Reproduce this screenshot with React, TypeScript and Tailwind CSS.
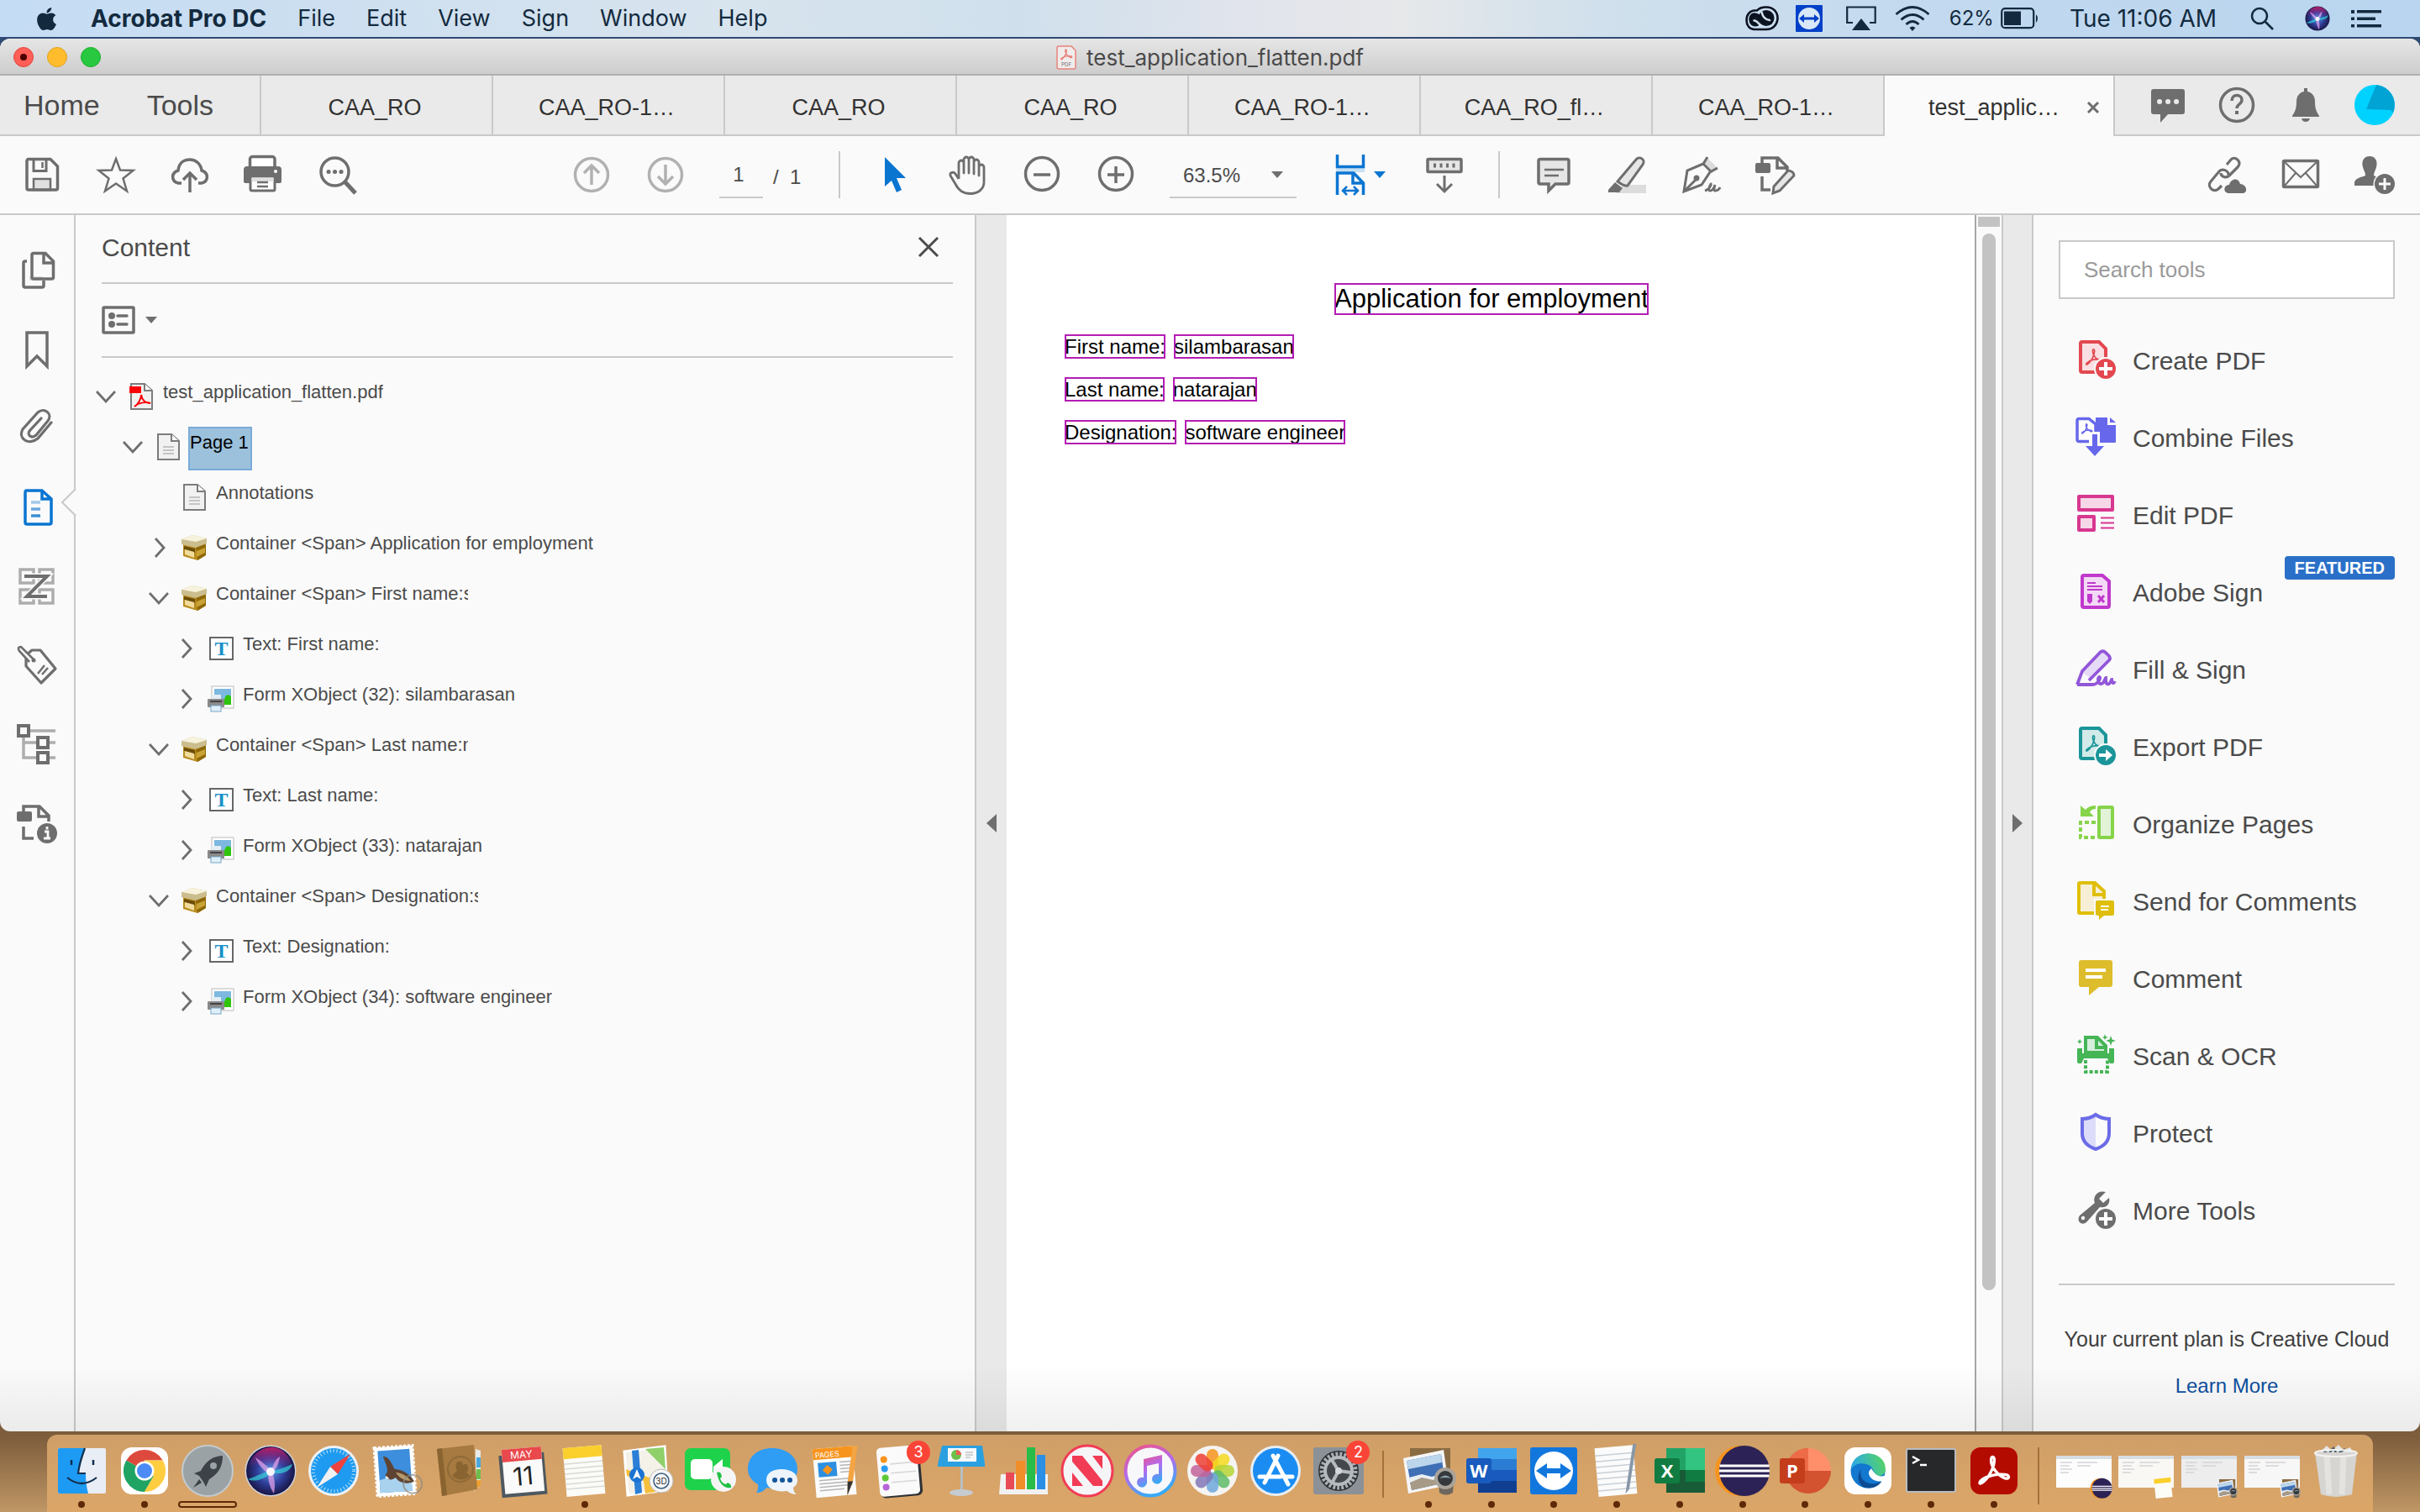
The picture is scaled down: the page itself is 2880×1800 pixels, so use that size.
import React, { useState } from "react";
import { FaApple } from "react-icons/fa";

const GRAY = "#6e6e6e";

interface IconProps {
  children: React.ReactNode;
  className?: string;
}

// Line icon on a 48 grid, shared by the toolbar, the rail and the tools pane
function Icon({ children, className = "size-12 shrink-0" }: IconProps) {
  return (
    <svg viewBox="0 0 48 48" className={className} fill="none" stroke={GRAY} strokeWidth="3.5" overflow="visible" aria-hidden="true">
      {children}
    </svg>
  );
}

function AcrobatMark({ color, width = 2 }: { color: string; width?: number }) {
  return (
    <path
      d="M11 37C18 33 24 21 24.500 13C24.700 8 21 8 21 13C21 20 28 29 36 32C41 33.500 41 28.500 36 28C28 27 18 29 12 33C8 35.500 8 39 11 37Z"
      fill="none"
      stroke={color}
      strokeWidth={width}
      strokeLinejoin="round"
    />
  );
}

/* ---------- menu bar ---------- */

const menus = ["File", "Edit", "View", "Sign", "Window", "Help"];

function SiriOrb() {
  return (
    <>
      <defs>
        <radialGradient id="orb" cx="50%" cy="50%" r="55%">
          <stop offset="0" stopColor="#5d9bea" />
          <stop offset="0.5" stopColor="#2f3f9a" />
          <stop offset="1" stopColor="#140d33" />
        </radialGradient>
        <linearGradient id="orbTop" x1="0" y1="0" x2="0" y2="1">
          <stop offset="0" stopColor="#b81f66" />
          <stop offset="1" stopColor="#8a2fa8" stopOpacity="0" />
        </linearGradient>
      </defs>
      <circle cx="32" cy="32" r="29" fill="url(#orb)" />
      <path d="M6 28C9 12 22 4 34 4C47 5 56 15 58 28C44 24 22 24 6 28Z" fill="url(#orbTop)" />
      <path d="M5 42C16 38 26 33 32 32C40 32 48 28 58 24C55 34 44 37 34 34C24 42 14 46 5 42Z" fill="#35d0d8" opacity="0.7" />
      <path d="M29 35C23 31 17 24 14 16C22 21 30 28 33 32C35 24 38 18 43 15C42 24 38 31 34 34C37 42 38 50 36 59C31 52 29 43 29 35Z" fill="#eba6ee" opacity="0.7" />
      <circle cx="32" cy="33" r="5" fill="#fff" opacity="0.9" />
    </>
  );
}

function MenuBar() {
  return (
    <header className="flex h-11 items-center bg-linear-[90deg,#c4dcf4_0%,#cddff0_14%,#d8e4ee_30%,#cfe0ec_42%,#e2e4ec_52%,#e6e8ea_58%,#d0e0ec_66%,#c2d9ef_80%,#b9d5ef_100%] pr-[46px] pl-10 font-[Inter,sans-serif] text-[27px] text-[#132a3e]">
      <FaApple size={31} aria-hidden="true" />
      <nav className="ml-[37px] flex items-center gap-[37px] leading-8">
        <strong className="text-[28px] font-bold">Acrobat Pro DC</strong>
        {menus.map((m) => (
          <button key={m} type="button">
            {m}
          </button>
        ))}
      </nav>

      <div className="ml-auto flex items-center">
        <svg viewBox="0 0 40 30" className="mr-5 h-[30px] w-10" fill="none" aria-hidden="true">
          <path d="M11 5.500H14C17 2 21 1.500 25 1.500C33 1.500 38.500 7 38.500 14.500C38.500 22 33 28 25 28H11C5 28 1.500 23 1.500 17C1.500 10 6 5.500 11 5.500Z" stroke="#0b1220" strokeWidth="2.600" />
          <circle cx="25" cy="14.500" r="9.500" fill="#0b1220" />
          <circle cx="12" cy="17" r="7.500" fill="#0b1220" />
          <path d="M21 23L11 13.500M22 24C16 24 14 17 9.500 15.500M27 22C21 20 18 8 11.500 9.500" stroke="#d0e0ec" strokeWidth="0.100" />
          <path d="M25 21C20 17 17 10 12 9.500C8 9 5.500 12 5.500 16.500" stroke="#0b1220" strokeWidth="2.500" />
          <path d="M19 24C15 20 13 17 10.500 17.500M19.500 7.500C21 14 24 16.500 29 17" stroke="#d0e0ec" strokeWidth="2.600" strokeLinecap="round" />
        </svg>
        <svg viewBox="0 0 32 32" className="mr-7 size-8" aria-hidden="true">
          <rect width="32" height="32" rx="1" fill="#0040c8" />
          <circle cx="16" cy="16" r="13" fill="#d8e8f8" />
          <path d="M4 16l6-5v3.500h12V11l6 5-6 5v-3.500H10V21z" fill="#0040c8" />
        </svg>
        <svg viewBox="0 0 36 30" className="mr-[22px] h-[30px] w-9" fill="none" stroke="#132a3e" strokeWidth="2.200" aria-hidden="true">
          <path d="M8 20H1.200V1.500h33.500V20H28" />
          <path d="M18 15l11 14H7z" fill="#132a3e" stroke="none" />
        </svg>
        <svg viewBox="0 0 42 30" className="mr-[23px] h-[30px] w-[42px]" fill="none" stroke="#132a3e" strokeWidth="2.800" aria-hidden="true">
          <path d="M1.500 10q19.500-17 39 0M7.500 16.500q13.500-12 27 0M13.500 22q7.500-7 15 0" />
          <path d="M17.500 26q3.500-3 7 0L21 30z" fill="#132a3e" stroke="none" />
        </svg>
        <span className="mr-2 text-2xl">62%</span>
        <svg viewBox="0 0 46 26" className="mr-9 h-[26px] w-[46px]" aria-hidden="true">
          <rect x="1.200" y="1.200" width="38" height="23" rx="4" fill="none" stroke="#132a3e" strokeWidth="2.200" />
          <rect x="4" y="4.500" width="20" height="16.500" fill="#132a3e" />
          <path d="M42 8q4 5 0 10z" fill="#132a3e" />
        </svg>
        <time className="mr-10 text-[28px]">Tue 11:06 AM</time>
        <svg viewBox="0 0 28 28" className="mr-9 size-7" fill="none" stroke="#132a3e" strokeWidth="2.600" aria-hidden="true">
          <circle cx="11" cy="11" r="9" />
          <path d="M17.500 17.500L27 27" />
        </svg>
        <svg viewBox="0 0 64 64" className="mr-6 size-8" aria-hidden="true">
          <SiriOrb />
        </svg>
        <svg viewBox="0 0 36 22" className="h-[22px] w-9" fill="#132a3e" aria-hidden="true">
          <path d="M0 1h4v4H0zM7 1h29v3.500H7zM0 9.500h4v3.500H0zM7 9.500h22v3.500H7zM0 18h4v3.500H0zM7 18h29v3.500H7z" />
        </svg>
      </div>
    </header>
  );
}

/* ---------- window chrome ---------- */

function TitleBar() {
  return (
    <div className="relative flex h-11 items-center justify-center gap-3 border-b-2 border-[#b0b0b0] bg-linear-to-b from-[#e6e6e6] to-[#cdcdcd] pt-0.5 font-[Inter,sans-serif] text-[26px] text-[#4a4a4a]">
      <div className="absolute left-4 flex gap-4">
        <button type="button" aria-label="Close window" className="flex size-6 items-center justify-center rounded-full border border-[#e2463f] bg-[#ff5f57]">
          <span className="size-2 rounded-full bg-[#4d0000]" />
        </button>
        <button type="button" aria-label="Minimize window" className="size-6 rounded-full border border-[#e0a023] bg-[#ffbd2e]" />
        <button type="button" aria-label="Zoom window" className="size-6 rounded-full border border-[#1dad2b] bg-[#28c940]" />
      </div>
      <svg viewBox="0 0 24 29" className="h-[29px] w-6" aria-hidden="true">
        <path d="M3 1h15l5 5v20a2 2 0 0 1-2 2H3a2 2 0 0 1-2-2V3a2 2 0 0 1 2-2Z" fill="#f0ecec" stroke="#e8837b" strokeWidth="1.500" />
        <g transform="translate(2 1) scale(0.42)">
          <AcrobatMark color="#e8837b" width={3.5} />
        </g>
        <text x="12" y="25" textAnchor="middle" fontSize="6.500" fill="#777" fontFamily="Roboto, sans-serif">PDF</text>
      </svg>
      <h1>test_application_flatten.pdf</h1>
    </div>
  );
}

const tabs = ["CAA_RO", "CAA_RO-1…", "CAA_RO", "CAA_RO", "CAA_RO-1…", "CAA_RO_fl…", "CAA_RO-1…"];

function TabBar() {
  return (
    <div className="flex h-[72px] bg-[#eaeaea] text-[27px] text-[#323232]">
      <nav className="flex w-[309px] shrink-0 items-center gap-14 border-b-2 border-[#c9c9c9] pl-7 text-[34px] text-[#4b4b4b]">
        <button type="button">Home</button>
        <button type="button">Tools</button>
      </nav>
      {tabs.map((t, i) => (
        <button key={i} type="button" className="w-[276px] border-b-2 border-l-2 border-[#c9c9c9] pt-1.5 pr-1">
          {t}
        </button>
      ))}
      <div className="flex w-[276px] items-center border-x-2 border-[#c9c9c9] bg-[#fafafa] pt-1 pr-4 pl-[52px]">
        <button type="button">test_applic…</button>
        <button type="button" aria-label="Close tab" className="ml-auto">
          <svg viewBox="0 0 16 16" className="size-4" stroke={GRAY} strokeWidth="3" aria-hidden="true">
            <path d="M2 2l12 12M14 2L2 14" />
          </svg>
        </button>
      </div>
      <div className="flex flex-1 items-center justify-end gap-[34px] border-b-2 border-[#c9c9c9] pr-[30px]">
        <button type="button" aria-label="Messages">
          <Icon>
            <path d="M7 5h34a3 3 0 0 1 3 3v24a3 3 0 0 1-3 3H24L15 45V35H7a3 3 0 0 1-3-3V8a3 3 0 0 1 3-3Z" fill={GRAY} stroke="none" />
            <path d="M14 20h.1M24 20h.1M34 20h.1" stroke="#eaeaea" strokeWidth="6" strokeLinecap="round" />
          </Icon>
        </button>
        <button type="button" aria-label="Help">
          <Icon>
            <circle cx="24" cy="24" r="19.500" />
            <path d="M18 19c0-9 12-8 12-1c0 5-6 5-6 10" />
            <path d="M24 31v4" strokeWidth="4" />
          </Icon>
        </button>
        <button type="button" aria-label="Notifications">
          <Icon>
            <path d="M22 4h4v4c6 1 9 6 9 12c0 9 2 12 5 17v1H8v-1c3-5 5-8 5-17c0-6 3-11 9-12ZM19 40h10q-1 4-5 4t-5-4Z" fill={GRAY} stroke="none" />
          </Icon>
        </button>
        <button type="button" aria-label="Account">
          <Icon>
            <circle cx="24" cy="24" r="24" fill="#00d2ff" stroke="none" />
            <path d="M26 0A24 24 0 0 1 46 33L43 30L14 29Z" fill="#00a3d3" stroke="none" />
          </Icon>
        </button>
      </div>
    </div>
  );
}

/* ---------- toolbar ---------- */

const fileActions = [
  {
    label: "Save",
    art: (
      <>
        <rect x="14" y="29" width="20" height="13" fill="#e0e0e0" strokeWidth="2.500" />
        <path d="M8 5.500H34L42.500 14V40a2 2 0 0 1-2 2H8a2 2 0 0 1-2-2V8a2 2 0 0 1 2-2.500Z" />
        <path d="M14 6V19.500H29V6" strokeWidth="3" />
        <path d="M24.500 9v7" strokeWidth="2.500" />
      </>
    ),
  },
  { label: "Star", art: <path d="M24 5L29 18.500L44.500 19L32.500 28.500L37 43.500L24 34.500L11 43.500L15.500 28.500L3.500 19L19 18.500Z" strokeWidth="2.500" /> },
  {
    label: "Upload",
    art: (
      <>
        <path d="M14 34H10C2 32 1 22 10 19C11 9 18 6 24 6C31 6 37 11 38 19C47 22 46 32 38 34H34" />
        <path d="M24 45V22M16 30L24 22L32 30" />
      </>
    ),
  },
  {
    label: "Print",
    art: (
      <>
        <path d="M7.500 15V5.500a3 3 0 0 1 3-3H34a3 3 0 0 1 3 3V15" fill="#fff" />
        <path d="M3 14H41a4 4 0 0 1 4 4V32a2 2 0 0 1-2 2H38V28H7V34H2a2 2 0 0 1-2-2V18a4 4 0 0 1 3-4Z" fill={GRAY} stroke="none" />
        <path d="M8 26H37V41a2 2 0 0 1-2 2H10a2 2 0 0 1-2-2Z" fill="#fff" strokeWidth="3" />
        <path d="M9.500 27.500H35.500V32H9.500Z" fill="#e0e0e0" stroke="none" />
        <path d="M16 33H29M16 38H29" strokeWidth="2.500" />
        <circle cx="38" cy="20" r="2" fill="#fff" stroke="none" />
      </>
    ),
  },
  {
    label: "Find",
    art: (
      <>
        <circle cx="20.500" cy="20.500" r="16.500" />
        <path d="M32 32L45 46" strokeWidth="5" />
        <path d="M13 20.500h.1M20.500 20.500h.1M28 20.500h.1" strokeWidth="5" strokeLinecap="round" />
      </>
    ),
  },
];

const pageActions = [
  { label: "Previous page", art: <path d="M24 36V13M15 22L24 13L33 22" stroke="#b1b1b1" /> },
  { label: "Next page", art: <path d="M24 12V35M15 26L24 35L33 26" stroke="#b1b1b1" /> },
];

const viewActions = [
  { label: "Select", art: <path d="M13 3L38 28H27L33 42L27 45L21 31L13 38Z" fill="#0a75d1" stroke="none" /> },
  {
    label: "Hand",
    art: (
      <path
        d="M13 29V10a3 3 0 0 1 6 0V22V6a3 3 0 0 1 6 0V22V6a3 3 0 0 1 6 0V23V9a3 3 0 0 1 6 0V25V15a3 3 0 0 1 6 0V33C43 40 37 46.500 27 46.500C18 46.500 13 43 9 35L3 25C2 21 7 20 9 23L13 29"
        strokeWidth="2.800"
        strokeLinejoin="round"
      />
    ),
  },
  {
    label: "Zoom out",
    art: (
      <>
        <circle cx="24" cy="23" r="19.500" />
        <path d="M14 24H34" />
      </>
    ),
  },
  {
    label: "Zoom in",
    art: (
      <>
        <circle cx="24" cy="23" r="19.500" />
        <path d="M14 24H34M24 14V34" />
      </>
    ),
  },
];

const markupActions = [
  {
    label: "Comment",
    art: (
      <>
        <path d="M8 5.500H40a2 2 0 0 1 2 2V33a2 2 0 0 1-2 2H26L18 43V35H8a2 2 0 0 1-2-2V7.500a2 2 0 0 1 2-2Z" fill="#e6e6e6" />
        <path d="M13 18H36M13 25H30" strokeWidth="2.500" />
      </>
    ),
  },
  {
    label: "Highlight",
    art: (
      <>
        <path d="M10 46L18 36H46V46Z" fill="#dcdcdc" stroke="none" />
        <path d="M12 32L34 6C38 1 46 6 42 12L24 37Q20 38 12 32Z" fill="#e6e6e6" strokeWidth="3" />
        <path d="M9 33L18 40L14 45H1V42Z" fill={GRAY} stroke="none" />
      </>
    ),
  },
  {
    label: "Sign",
    art: (
      <>
        <path d="M31 4L43 16L36 20L26 10Z" fill="#dcdcdc" stroke="none" />
        <path d="M31 3L26 11L7 19L3 44L24 36L34 21L43 16M26 11L36 21M4 43L17 30" strokeWidth="3" />
        <circle cx="18" cy="28" r="3.500" fill={GRAY} stroke="none" />
        <path d="M28 43C34 42 36 34 35 35C33 38 31 44 35 43C38 42 40 36 40 36C39 40 38 44 41 43Q45 42 46 39" strokeWidth="2.800" />
      </>
    ),
  },
  {
    label: "Edit",
    art: (
      <>
        <path d="M8 10V4H27L38 15V20M26 5V16H37M8 26V42H18" />
        <rect x="0" y="10" width="18" height="12" rx="2" fill={GRAY} stroke="none" />
        <path d="M22 38L39 19Q46 20 46 25L29 43L21 46Z" fill="#e6e6e6" strokeWidth="3" />
      </>
    ),
  },
];

const shareActions = [
  {
    label: "Share link",
    art: (
      <>
        <path d="M24 12L29 6C34 1 43 9 37 15L27 25C23 29 17 26 17 22M18 37L14 41C8 46 0 38 5 32L15 20C19 16 26 19 26 24" strokeWidth="3.200" />
        <path d="M27 46C19 46 20 36 27 36C29 28 38 27 40 35C49 36 49 46 43 46Z" fill={GRAY} stroke="none" />
      </>
    ),
  },
  {
    label: "Email",
    art: (
      <>
        <rect x="3.500" y="7.500" width="41" height="31" rx="1" />
        <path d="M5 9L24 27L43 9M5 37L18 22M43 37L30 22" strokeWidth="2" />
      </>
    ),
  },
  {
    label: "Add people",
    art: (
      <>
        <path d="M18 2C25 2 28 8 26 15C25 19 23 21 23 25L32 29V37H0V33C1 28 8 27 13 25C13 21 11 19 10 15C8 8 11 2 18 2Z" fill={GRAY} stroke="none" />
        <circle cx="36" cy="35" r="13.500" fill="#fafafa" stroke="none" />
        <circle cx="36" cy="35" r="12" fill={GRAY} stroke="none" />
        <path d="M29 35H43M36 28V42" stroke="#fafafa" strokeWidth="3" />
      </>
    ),
  },
];

function Actions({ items, className }: { items: { label: string; art: React.ReactNode }[]; className: string }) {
  return (
    <div className={`flex gap-10 ${className}`}>
      {items.map((a) => (
        <button key={a.label} type="button" aria-label={a.label}>
          <Icon>{a.art}</Icon>
        </button>
      ))}
    </div>
  );
}

function Caret({ color = GRAY, className = "h-2 w-[14px]" }: { color?: string; className?: string }) {
  return (
    <svg viewBox="0 0 14 8" className={className} fill={color} aria-hidden="true">
      <path d="M0 0H14L7 8Z" />
    </svg>
  );
}

function Toolbar() {
  const [page, setPage] = useState("1");
  const [zoom, setZoom] = useState("63.5%");

  return (
    <div className="flex h-[94px] items-center border-b-2 border-[#c9c9c9] bg-[#fafafa] pr-[30px] pl-[26px] text-2xl text-[#4b4b4b]">
      <Actions items={fileActions} className="mr-[254px]" />
      <Actions
        items={pageActions.map((a) => ({
          ...a,
          art: (
            <>
              <circle cx="24" cy="24" r="19.500" stroke="#b1b1b1" />
              {a.art}
            </>
          ),
        }))}
        className="mr-10"
      />
      <input
        aria-label="Page number"
        value={page}
        onChange={(e) => setPage(e.target.value)}
        className="h-14 w-[52px] border-b-2 border-[#c9c9c9] bg-transparent pt-0.5 pr-1.5 text-center outline-none"
      />
      <span className="ml-3 w-[78px] pt-1.5">/&nbsp; 1</span>
      <div className="mr-10 h-14 w-0.5 bg-[#c9c9c9]" />
      <Actions items={viewActions} className="mr-10" />
      <div className="relative mr-10">
        <select
          aria-label="Zoom level"
          value={zoom}
          onChange={(e) => setZoom(e.target.value)}
          className="h-14 w-[151px] appearance-none border-b-2 border-[#c9c9c9] bg-transparent pt-1 pl-4 outline-none"
        >
          <option>63.5%</option>
          <option>100%</option>
        </select>
        <Caret className="pointer-events-none absolute top-6 right-4 h-2 w-[14px]" />
      </div>
      <button type="button" aria-label="Fit width" className="mr-[46px] flex items-center gap-1">
        <Icon>
          <rect x="7" y="16" width="34" height="5" fill="#c5dff3" stroke="none" />
          <path d="M8.500 0V14.500H39.500V0M8.500 48V22H28L39.500 34V48M27 22V34H39" stroke="#0a75d1" />
          <path d="M15 43H33M20 38L15 43L20 48M28 38L33 43L28 48" stroke="#0a75d1" strokeWidth="2.500" />
        </Icon>
        <Caret color="#0a75d1" />
      </button>
      <button type="button" aria-label="Scrolling">
        <Icon>
          <rect x="4" y="5.500" width="40" height="15" rx="1" fill="#e6e6e6" />
          <path d="M11 13H39" strokeWidth="5" strokeDasharray="3 4.500" />
          <path d="M24 25V44M15 35L24 44L33 35" strokeWidth="3" />
        </Icon>
      </button>
      <div className="mx-10 h-14 w-0.5 bg-[#c9c9c9]" />
      <Actions items={markupActions} className="" />
      <Actions items={shareActions} className="ml-auto" />
    </div>
  );
}

/* ---------- navigation rail ---------- */

const railItems = [
  {
    label: "Page thumbnails",
    art: (
      <>
        <path d="M15 36H31V31H15Z" fill="#e0e0e0" stroke="none" />
        <path d="M12 13H10a2 2 0 0 0-2 2V42a2 2 0 0 0 2 2H30a2 2 0 0 0 2-2V36" />
        <path d="M20 3.500H34L43.500 13V32a2 2 0 0 1-2 2H20a2 2 0 0 1-2-2V5.500a2 2 0 0 1 2-2ZM32 4V15H43" />
      </>
    ),
  },
  { label: "Bookmarks", art: <path d="M12 4H36V44L24 32L12 44Z" /> },
  {
    label: "Attachments",
    art: (
      <path
        d="M41 18L25 37C14 46 1 37 7 26L25 6C33 -1 43 8 37 16L23 33C17 38 11 32 16 27L29 13"
        strokeWidth="3.200"
        strokeLinecap="round"
        transform="translate(0 -1)"
      />
    ),
  },
  {
    label: "Content",
    active: true,
    art: (
      <>
        <path d="M11 4H30L41 14V42a2 2 0 0 1-2 2H12a2 2 0 0 1-2-2V6a2 2 0 0 1 1-2ZM30 4V14H41" stroke="#0a75d1" />
        <path d="M17 18H28" stroke="#a3c9ea" />
        <path d="M17 26H28" stroke="#6aa8de" />
        <path d="M17 34H28" stroke="#3c8fd6" />
      </>
    ),
  },
  {
    label: "Order",
    art: (
      <>
        <path d="M4 4H20V20H4ZM27 4H43V20H27ZM4 28H20V44H4ZM27 28H43V44H27Z" stroke="#adadad" />
        <path d="M10 12H36L12 36H36" stroke="#fafafa" strokeWidth="7" />
        <path d="M9 12H36L12 36H36" strokeWidth="4" />
      </>
    ),
  },
  {
    label: "Tags",
    art: (
      <>
        <path d="M18 6L11 12V25L29 45L46 28L28 6Z" strokeWidth="3.200" strokeLinejoin="round" />
        <path d="M21 18L5 2Q0 2 3 7L15 20" strokeWidth="2.600" fill="#fafafa" />
        <circle cx="20" cy="18" r="2.500" fill={GRAY} stroke="none" />
        <path d="M25 34L33 24M30 35L37 27" strokeWidth="2.500" />
      </>
    ),
  },
  {
    label: "Model tree",
    art: (
      <>
        <path d="M15 8H46M8 15V40H24M8 22H24M37 22H46M37 40H46" stroke="#adadad" />
        <path d="M2 2H14V14H2ZM25 16H37V28H25ZM25 34H37V46H25Z" fill="#fafafa" strokeWidth="4" />
      </>
    ),
  },
  {
    label: "Document info",
    art: (
      <>
        <path d="M8 10V4H27L38 15V22M26 5V16H37M8 28V42H20" />
        <rect x="0" y="10" width="18" height="12" rx="2" fill={GRAY} stroke="none" />
        <circle cx="36" cy="36" r="12" fill={GRAY} stroke="none" />
        <path d="M36 28V31.500M33 34H37V42M32 42H40" stroke="#fafafa" strokeWidth="2.800" />
      </>
    ),
  },
];

function Rail() {
  return (
    <nav className="flex w-[90px] shrink-0 flex-col items-center gap-[46px] border-r-2 border-[#c9c9c9] pt-[42px]">
      {railItems.map((r) => (
        <button key={r.label} type="button" aria-label={r.label} className="relative">
          <Icon>{r.art}</Icon>
          {r.active && (
            <svg viewBox="0 0 18 32" className="absolute top-0.5 left-[53px] h-8 w-[18px]" aria-hidden="true">
              <path d="M18 0L1 16L18 32Z" fill="#fafafa" />
              <path d="M17 0L1 16L17 32" fill="none" stroke="#c9c9c9" strokeWidth="2" />
            </svg>
          )}
        </button>
      ))}
    </nav>
  );
}

/* ---------- content tree ---------- */

type NodeKind = "pdf" | "page" | "box" | "text" | "form";

interface TreeNode {
  kind: NodeKind;
  level: number;
  open?: boolean;
  label: string;
  selected?: boolean;
  clip?: string;
}

const nodes: TreeNode[] = [
  { kind: "pdf", level: 0, open: true, label: "test_application_flatten.pdf" },
  { kind: "page", level: 1, open: true, label: "Page 1", selected: true },
  { kind: "page", level: 2, label: "Annotations" },
  { kind: "box", level: 2, open: false, label: "Container <Span> Application for employment" },
  { kind: "box", level: 2, open: true, label: "Container <Span> First name:s", clip: "w-[304px]" },
  { kind: "text", level: 3, open: false, label: "Text: First name:" },
  { kind: "form", level: 3, open: false, label: "Form XObject (32): silambarasan" },
  { kind: "box", level: 2, open: true, label: "Container <Span> Last name:n", clip: "w-[304px]" },
  { kind: "text", level: 3, open: false, label: "Text: Last name:" },
  { kind: "form", level: 3, open: false, label: "Form XObject (33): natarajan" },
  { kind: "box", level: 2, open: true, label: "Container <Span> Designation:s", clip: "w-[316px]" },
  { kind: "text", level: 3, open: false, label: "Text: Designation:" },
  { kind: "form", level: 3, open: false, label: "Form XObject (34): software engineer" },
];

const indents = ["pl-6", "pl-14", "pl-[87px]", "pl-[119px]"];

function NodeIcon({ kind }: { kind: NodeKind }) {
  return (
    <svg viewBox="0 0 32 32" className="size-8 shrink-0" aria-hidden="true">
      {(kind === "pdf" || kind === "page") && (
        <>
          <path d="M4 1H20L29 9V31H4Z" fill="#f1f1f1" stroke="#7c7c7c" strokeWidth="2" />
          <path d="M20 1V9H29" fill="#fff" stroke="#7c7c7c" strokeWidth="2" />
        </>
      )}
      {kind === "page" && <path d="M10 16H23M10 20H23M10 24H23" stroke="#b5b5b5" strokeWidth="1.500" />}
      {kind === "pdf" && (
        <>
          <rect x="2" y="4" width="14" height="8" fill="#fb0007" />
          <path d="M8 28C13 25 16 18 16 14C17 20 21 24 27 24C22 22 13 23 8 28Z" fill="none" stroke="#fb0007" strokeWidth="2" />
        </>
      )}
      {kind === "box" && (
        <>
          <path d="M3 12L18 15L30 11V25L20 31L3 26Z" fill="#b98c20" />
          <path d="M18 15L30 11V25L20 31Z" fill="#8e6706" />
          <path d="M4 14L17 17V22L4 18Z" fill="#6b4d08" />
          <path d="M5 18L16 21V28L5 24Z" fill="#f0dc9c" />
          <path d="M19 20L29 16V22L19 27Z" fill="#c9a235" />
          <path d="M1 6L14 1L31 5V11L18 16L1 12Z" fill="#cbbd8d" />
          <path d="M1 6L14 1L31 5L18 9Z" fill="#f7f2dc" />
        </>
      )}
      {kind === "text" && (
        <>
          <rect x="3" y="3" width="27" height="26" fill="#fff" stroke="#666" strokeWidth="2" />
          <text x="16.500" y="24" textAnchor="middle" fontFamily="'Liberation Serif', serif" fontWeight="700" fontSize="24" fill="#1a8fc7">T</text>
        </>
      )}
      {kind === "form" && (
        <>
          <rect x="5" y="1" width="26" height="26" fill="#fff" stroke="#cfcfcf" strokeWidth="1.500" />
          <rect x="8" y="4" width="20" height="19" fill="#7db8e0" />
          <path d="M17 23L22 12Q25 10 28 13V23Z" fill="#2fc40c" />
          <rect x="5" y="11" width="11" height="8" fill="#e4edf4" />
          <rect x="0" y="16" width="20" height="10" rx="1" fill="#8a8a8a" />
          <path d="M3 18H17V20H3Z" fill="#444" />
          <rect x="4" y="24" width="12" height="7" fill="#dff0fa" stroke="#7ba8c7" />
        </>
      )}
    </svg>
  );
}

function ContentPanel() {
  return (
    <aside className="w-[1072px] shrink-0 border-r-2 border-[#c9c9c9] text-[#4b4b4b]">
      <div className="mr-[26px] ml-[31px]">
        <div className="flex h-[82px] items-center justify-between border-b-2 border-[#c9c9c9] pr-4 pb-1 text-[30px]">
          <h2>Content</h2>
          <button type="button" aria-label="Close panel">
            <svg viewBox="0 0 26 26" className="size-[26px]" stroke="#4b4b4b" strokeWidth="3" aria-hidden="true">
              <path d="M2 2L24 24M24 2L2 24" />
            </svg>
          </button>
        </div>
        <div className="flex h-[88px] items-center border-b-2 border-[#c9c9c9]">
          <button type="button" aria-label="Options" className="flex items-center gap-3">
            <svg viewBox="0 0 40 34" className="h-[34px] w-10" aria-hidden="true">
              <rect x="2" y="2" width="36" height="30" rx="1" fill="none" stroke={GRAY} strokeWidth="3.500" />
              <circle cx="12" cy="12" r="4" fill={GRAY} />
              <circle cx="12" cy="22" r="4" fill={GRAY} />
              <path d="M19 12H30M19 22H30" stroke={GRAY} strokeWidth="3.500" strokeLinecap="round" />
            </svg>
            <Caret />
          </button>
        </div>
      </div>
      <ul className="mt-[18px] text-[22px] leading-7">
        {nodes.map((n) => (
          <li key={n.label} className={`flex h-[60px] items-center ${indents[n.level]}`}>
            {n.open === undefined ? (
              <span className="mr-[14px] w-6" />
            ) : (
              <button type="button" aria-label={n.open ? "Collapse" : "Expand"} className="mr-[14px] mb-1">
                <svg viewBox="0 0 24 24" className="size-6" fill="none" stroke={GRAY} strokeWidth="2.800" aria-hidden="true">
                  <path d={n.open ? "M1 6L12 18L23 6" : "M8 1L18 12L8 23"} />
                </svg>
              </button>
            )}
            <span className="mb-1">
              <NodeIcon kind={n.kind} />
            </span>
            <span
              className={`ml-2 h-[52px] overflow-hidden border-2 pt-[3px] whitespace-nowrap ${
                n.selected ? "border-[#7aaad8] bg-[#9cc1dc] pr-0.5 text-black" : "border-transparent"
              } ${n.clip ?? ""}`}
            >
              {n.label}
            </span>
          </li>
        ))}
      </ul>
    </aside>
  );
}

/* ---------- document ---------- */

const fields = [
  ["First name:", "silambarasan"],
  ["Last name:", "natarajan"],
  ["Designation:", "software engineer"],
];

function Tagged({ children }: { children: React.ReactNode }) {
  return <span className="outline-2 -outline-offset-2 outline-[#b41cb4]">{children}</span>;
}

function DocumentView() {
  return (
    <main className="flex min-w-0 flex-1">
      <button type="button" aria-label="Collapse left pane" className="flex w-9 shrink-0 items-center justify-center bg-[#e9e9e9]">
        <svg viewBox="0 0 12 22" className="h-[22px] w-3" fill={GRAY} aria-hidden="true">
          <path d="M12 0V22L0 11Z" />
        </svg>
      </button>
      <article className="flex-1 border-r-2 border-[#a6a6a6] bg-white pt-[81px] pl-[69px] text-black">
        <h2 className="pr-[67px] text-center text-[31px] leading-[38px]">
          <span className="inline-block outline-2 -outline-offset-2 outline-[#b41cb4]">Application for employment</span>
        </h2>
        <div className="mt-[23px] flex flex-col gap-[22px] text-2xl leading-[29px]">
          {fields.map(([name, value]) => (
            <p key={name} className="flex gap-[10px]">
              <Tagged>{name}</Tagged>
              <Tagged>{value}</Tagged>
            </p>
          ))}
        </div>
      </article>
      <div className="flex w-8 shrink-0 flex-col items-center border-r-2 border-[#c9c9c9] bg-[#fafafa] pt-0.5">
        <span className="h-3 w-[26px] bg-[#c3c3c3]" />
        <span className="mt-2 mb-[168px] w-4 flex-1 rounded-full bg-[#c3c3c3]" />
      </div>
      <button type="button" aria-label="Collapse tools pane" className="flex w-9 shrink-0 items-center justify-center border-r-2 border-[#c9c9c9] bg-[#e9e9e9]">
        <svg viewBox="0 0 12 22" className="h-[22px] w-3" fill={GRAY} aria-hidden="true">
          <path d="M0 0V22L12 11Z" />
        </svg>
      </button>
    </main>
  );
}

/* ---------- tools pane ---------- */

const tools = [
  {
    label: "Create PDF",
    art: (
      <>
        <path d="M8 2H28L36 10V38H8a2 2 0 0 1-2-2V4a2 2 0 0 1 2-2Z" fill="#f9dfe1" stroke="#e34850" strokeWidth="4" />
        <g transform="translate(7 5) scale(0.64)"><AcrobatMark color="#e34850" width={2.6} /></g>
        <circle cx="36" cy="34" r="14" fill="#fafafa" stroke="none" />
        <circle cx="36" cy="34" r="12" fill="#e34850" stroke="none" />
        <path d="M28 34H44M36 26V42" stroke="#fff" strokeWidth="4" />
      </>
    ),
  },
  {
    label: "Combine Files",
    art: (
      <>
        <path d="M24 0H38V9H48V29a1 1 0 0 1-1 1H24ZM41 0L48 6H41Z" fill="#6767ec" stroke="none" />
        <path d="M16 28.500H4a2 2 0 0 1-2-2V3.500a2 2 0 0 1 2-2H16L24 8V18" fill="#fff" stroke="#6767ec" />
        <g transform="translate(4 4) scale(0.4)"><AcrobatMark color="#6767ec" width={3.5} /></g>
        <path d="M20 17H29V32H20Z" fill="#fafafa" stroke="none" />
        <path d="M20 20H26V34H34L23 46L12 34H20Z" fill="#6767ec" stroke="none" />
      </>
    ),
  },
  {
    label: "Edit PDF",
    art: (
      <>
        <path d="M4 2H44V18H4ZM4 26H22V42H4Z" fill="#f6d7e7" stroke="#d83790" strokeWidth="4" strokeLinejoin="round" />
        <path d="M30 27.500H46M30 33.500H46M30 39.500H46" stroke="#d83790" strokeWidth="2" />
      </>
    ),
  },
  {
    label: "Adobe Sign",
    featured: true,
    art: (
      <>
        <path d="M10 4H32L40 11V40a2 2 0 0 1-2 2H10a2 2 0 0 1-2-2V6a2 2 0 0 1 2-2Z" fill="#f3d9f5" stroke="#c038cc" strokeWidth="4" />
        <path d="M14 13H24M14 17H32M14 21H32" stroke="#c038cc" strokeWidth="1.800" />
        <path d="M14 26H20V35L17 38L14 35Z" fill="#c038cc" stroke="none" />
        <path d="M27 28L34 36M34 28L27 36" stroke="#c038cc" strokeWidth="3" />
      </>
    ),
  },
  {
    label: "Fill & Sign",
    art: (
      <>
        <path d="M8 27L31 3Q34 1 37 4L40 7Q43 10 40 13L18 35Z" fill="#e6dbf6" stroke="none" />
        <path d="M2 42L8 26L30 3Q33 1 36 4L40 8Q42 11 40 13L16 37M2 42H20C28 42 31 32 28 33C26 35 27 42 31 41C35 40 35 34 36 34C36 38 36 43 40 41C43 39 42 36 43 36C43 40 45 42 47 38" stroke="#9256d9" strokeWidth="3.800" />
      </>
    ),
  },
  {
    label: "Export PDF",
    art: (
      <>
        <path d="M8 2H28L36 10V38H8a2 2 0 0 1-2-2V4a2 2 0 0 1 2-2Z" fill="#d2eae8" stroke="#1b959a" strokeWidth="4" />
        <g transform="translate(7 5) scale(0.64)"><AcrobatMark color="#1b959a" width={2.6} /></g>
        <circle cx="36" cy="34" r="14" fill="#fafafa" stroke="none" />
        <circle cx="36" cy="34" r="12" fill="#1b959a" stroke="none" />
        <path d="M28 32H36V27L44 34L36 41V36H28Z" fill="#fff" stroke="none" />
      </>
    ),
  },
  {
    label: "Organize Pages",
    art: (
      <>
        <rect x="28" y="4" width="16" height="36" rx="1" fill="#e2f3d8" stroke="#86d44a" strokeWidth="4" />
        <path d="M24 22H6V40H24" stroke="#86d44a" strokeWidth="4" strokeDasharray="5 3" />
        <path d="M24 2V6Q19 6 17 10L22 15H6V2L12 7Q16 2 24 2Z" fill="#86d44a" stroke="none" />
      </>
    ),
  },
  {
    label: "Send for Comments",
    art: (
      <>
        <path d="M5 2H23L34 12V38H5a1 1 0 0 1-1-1V3a1 1 0 0 1 1-1Z" fill="#f6efd5" stroke="#dfbf0b" strokeWidth="4" />
        <path d="M22 2V16H35" stroke="#dfbf0b" strokeWidth="4" />
        <path d="M22 21H48V46H22Z" fill="#fafafa" stroke="none" />
        <path d="M26 23H44a2 2 0 0 1 2 2V39a2 2 0 0 1-2 2H34L28 46V41H26a2 2 0 0 1-2-2V25a2 2 0 0 1 2-2Z" fill="#dfbf0b" stroke="none" />
        <path d="M30 30H40M30 34H39" stroke="#fff" strokeWidth="1.800" />
      </>
    ),
  },
  {
    label: "Comment",
    art: (
      <>
        <path d="M7 2H41a3 3 0 0 1 3 3V31a3 3 0 0 1-3 3H28L16 44V34H7a3 3 0 0 1-3-3V5a3 3 0 0 1 3-3Z" fill="#ddbd2b" stroke="none" />
        <path d="M12 14H36M12 22H32" stroke="#fff" strokeWidth="4" />
      </>
    ),
  },
  {
    label: "Scan & OCR",
    art: (
      <>
        <path d="M12 20V2H26L36 12V20Z" fill="#d6eedb" stroke="#45b556" strokeWidth="4" />
        <path d="M25 3V14H36" stroke="#45b556" strokeWidth="4" />
        <path d="M2 16a1 1 0 0 1 1-1H8V21H40V15H45a1 1 0 0 1 1 1V31a2 2 0 0 1-2 2H41L38 27H10L7 33H4a2 2 0 0 1-2-2Z" fill="#45b556" stroke="none" />
        <path d="M12 29V43H38V29" stroke="#45b556" strokeWidth="4" strokeDasharray="4 2.200" />
        <path d="M42 0L43.500 4.500L48 6L43.500 7.500L42 12L40.500 7.500L36 6L40.500 4.500ZM35 -2L36 1L39 2L36 3L35 5L34 3L32 2L34 1ZM5 4L6 6L8 7L6 8L5 10L4 8L2 7L4 6Z" fill="#45b556" stroke="none" />
      </>
    ),
  },
  {
    label: "Protect",
    art: (
      <>
        <path d="M24 4V43C13 39 9 34 9 24V8Q17 8 24 4Z" fill="#dcdcfa" stroke="none" />
        <path d="M24 2Q31 7 40 7V24C40 34 33 40 24 43C15 40 8 34 8 24V7Q17 7 24 2Z" stroke="#6b6be8" strokeWidth="4" />
      </>
    ),
  },
  {
    label: "More Tools",
    art: (
      <>
        <path d="M36 2C26 -1 20 8 23 15L5 30C0 38 9 43 14 37L29 20C36 22 42 16 40 9L33 15L28 10Z" fill={GRAY} stroke="none" />
        <circle cx="9" cy="33" r="2.200" fill="#fafafa" stroke="none" />
        <circle cx="36" cy="34" r="14" fill="#fafafa" stroke="none" />
        <circle cx="36" cy="34" r="12" fill={GRAY} stroke="none" />
        <path d="M28 34H44M36 26V42" stroke="#fff" strokeWidth="4" />
      </>
    ),
  },
];

function ToolsPane() {
  const [query, setQuery] = useState("");

  return (
    <aside className="w-[460px] shrink-0 px-[30px] pt-[30px] text-[#4b4b4b]">
      <input
        type="search"
        aria-label="Search tools"
        placeholder="Search tools"
        value={query}
        onChange={(e) => setQuery(e.target.value)}
        className="h-[70px] w-full border-2 border-[#c9c9c9] bg-white pl-7 text-[26px] outline-none placeholder:text-[#9a9a9a]"
      />
      <ul className="mt-[27px] text-[30px]">
        {tools.map((t) => (
          <li key={t.label} className="relative">
            <button type="button" className="flex h-[92px] w-full items-center gap-5 pl-5 text-left">
              <Icon>{t.art}</Icon>
              {t.label}
            </button>
            {t.featured && (
              <span className="absolute top-[3px] right-0 rounded-sm bg-[#2a70c8] px-3 text-xl leading-7 font-bold text-white">FEATURED</span>
            )}
          </li>
        ))}
      </ul>
      <div className="mt-[41px] border-t-2 border-[#c9c9c9] pt-12 text-center text-2xl leading-8">
        <p className="-mx-4 text-[25px] whitespace-nowrap text-[#3f3f3f]">Your current plan is Creative Cloud</p>
        <a href="#plans" className="mt-6 inline-block text-[#0d4f9e]">
          Learn More
        </a>
      </div>
    </aside>
  );
}

/* ---------- dock ---------- */

interface DockItem {
  name: string;
  running?: boolean;
  badge?: string;
  art: React.ReactNode;
}

const petals = ["#f7941d", "#f4d91f", "#b5d334", "#5dbb6a", "#6fa8dc", "#8277b8", "#c2629a", "#ee4035"];

const appItems: DockItem[] = [
  {
    name: "Finder",
    running: true,
    art: (
      <>
        <rect x="4" y="5" width="57" height="54" rx="2" fill="#e9eef6" />
        <path d="M6 5H36C32 16 29 25 28 35H37C37 44 38 52 40 59H6a2 2 0 0 1-2-2V7a2 2 0 0 1 2-2Z" fill="#1d9bf4" />
        <path d="M20 19V25M46 19V25" stroke="#12304f" strokeWidth="2.500" />
        <path d="M15 40Q32 54 50 40M36 5C32 16 29 25 28 35H37" fill="none" stroke="#12304f" strokeWidth="2.200" />
      </>
    ),
  },
  {
    name: "Chrome",
    running: true,
    art: (
      <>
        <rect x="4" y="4" width="56" height="56" rx="13" fill="#fff" />
        <path d="M32 32L10.300 19.500A25 25 0 0 1 53.700 19.500H32Z" fill="#dd4a3d" />
        <path d="M32 32L10.300 19.500A25 25 0 0 0 32 57L43 38Z" fill="#1fa463" />
        <path d="M32 19.500H53.700A25 25 0 0 1 32 57L43 38Z" fill="#ffcd40" />
        <circle cx="32" cy="32" r="11.500" fill="#fff" />
        <circle cx="32" cy="32" r="9" fill="#4c8bf5" />
      </>
    ),
  },
  {
    name: "Launchpad",
    running: true,
    art: (
      <>
        <circle cx="32" cy="32" r="30" fill="#9aa2a6" stroke="#c3cacd" strokeWidth="2" />
        <path d="M50 14C38 14 29 22 24 32L16 35L22 38L27 45L30 51L34 42C44 36 50 28 50 14Z" fill="#3c4247" />
        <circle cx="39" cy="26" r="4" fill="#9aa2a6" />
        <path d="M22 42L15 52L25 46Z" fill="#3c4247" />
      </>
    ),
  },
  {
    name: "Siri",
    art: (
      <>
        <circle cx="32" cy="32" r="30.500" fill="#cfd3dc" />
        <SiriOrb />
      </>
    ),
  },
  {
    name: "Safari",
    art: (
      <>
        <circle cx="32" cy="32" r="30" fill="#eef2f5" />
        <circle cx="32" cy="32" r="27" fill="#1e9bf0" />
        <circle cx="32" cy="32" r="24" fill="none" stroke="#bfe2fa" strokeWidth="4" strokeDasharray="1 3" />
        <path d="M52 12L37 36L28 27Z" fill="#f0423c" />
        <path d="M12 52L28 27L37 36Z" fill="#f1f1f1" />
      </>
    ),
  },
  {
    name: "Mail",
    art: (
      <g transform="rotate(-4 32 32)">
        <path d="M8 3H54V61H8Z" fill="#fff" stroke="#fff" strokeWidth="3" strokeDasharray="3 2" />
        <path d="M12 7H50V57H12Z" fill="#3d8edc" />
        <path d="M12 42Q30 36 50 46V57H12Z" fill="#a9d2ef" />
        <path d="M18 14C25 14 27 22 31 30C41 31 49 38 53 46C46 49 36 48 31 40C26 44 22 42 19 36C25 32 21 24 18 14Z" fill="#5e4332" />
        <path d="M32 34C40 35 45 40 49 45C43 45 36 42 32 34Z" fill="#b59a6c" />
        <path d="M20 37L24 41L19 40Z" fill="#f6f2e4" />
        <circle cx="51" cy="49" r="11" fill="none" stroke="#8f8a80" strokeWidth="2" opacity="0.7" />
      </g>
    ),
  },
  {
    name: "Contacts",
    art: (
      <>
        <path d="M52 6L58 8V50L50 56Z" fill="#e9e9e9" />
        <path d="M53 16H58V28H53Z" fill="#4aa8dc" />
        <path d="M53 30H58V42H53Z" fill="#6cc04a" />
        <path d="M53 43H58V50L53 53Z" fill="#f0a032" />
        <path d="M6 6L50 1L54 54L12 62Z" fill="#a67a40" />
        <path d="M6 6L12 5L18 61L12 62Z" fill="#8a6430" />
        <circle cx="34" cy="30" r="15" fill="none" stroke="#8f6a38" strokeWidth="2" />
        <path d="M24 38Q27 34 30 32Q26 24 31 21Q37 20 37 25Q43 22 43 29Q43 33 41 34Q44 36 45 38Q36 47 24 38Z" fill="#8a6430" />
      </>
    ),
  },
  {
    name: "Calendar",
    art: (
      <g transform="rotate(-5 32 32)">
        <path d="M6 12H60V62H6Z" fill="#4f5860" />
        <path d="M10 5H57V58H10Z" fill="#fafafa" />
        <path d="M10 5H57V20H10Z" fill="#e9484c" />
        <text x="33" y="17" textAnchor="middle" fontSize="12" fill="#fff" fontFamily="Inter, sans-serif">MAY</text>
        <text x="33" y="49" textAnchor="middle" fontSize="30" fill="#222" fontFamily="Inter, sans-serif">11</text>
      </g>
    ),
  },
  {
    name: "Notes",
    running: true,
    art: (
      <g transform="rotate(-5 32 32)">
        <rect x="8" y="3" width="46" height="58" fill="#fbfbf7" />
        <rect x="8" y="3" width="46" height="13" fill="#fbcf2c" />
        <path d="M8 22H54M8 28H54M8 34H54M8 40H54M8 46H54M8 52H54" stroke="#d9d9d4" strokeWidth="1.500" />
      </g>
    ),
  },
  {
    name: "Maps",
    art: (
      <>
        <path d="M5 9L53 3L56 55L9 61Z" fill="#f4f1e8" stroke="#fff" strokeWidth="3" />
        <path d="M30 6L52 4L54 30Z" fill="#8fd06a" />
        <path d="M7 30L40 42L42 57L30 59L28 44L8 38Z" fill="#f6bf3a" />
        <path d="M14 8L22 7L26 58L18 60Z" fill="#2c7fd6" />
        <circle cx="20" cy="37" r="9" fill="#1b74d2" />
        <path d="M20 30L25 42L20 39L15 42Z" fill="#fff" />
        <circle cx="49" cy="44" r="14" fill="#f7f7f7" stroke="#b9b9b9" />
        <circle cx="49" cy="44" r="9" fill="none" stroke="#355a80" strokeWidth="1.500" />
        <text x="49" y="48" textAnchor="middle" fontSize="10" fill="#333" fontFamily="Inter, sans-serif">3D</text>
      </>
    ),
  },
  {
    name: "FaceTime",
    art: (
      <>
        <rect x="2" y="5" width="54" height="50" rx="7" fill="#1fd24b" />
        <rect x="9" y="18" width="26" height="24" rx="5" fill="#fff" />
        <path d="M36 27L47 18V38H36Z" fill="#fff" />
        <circle cx="48" cy="42" r="15" fill="#f5f5f5" />
        <path d="M40 34Q45 32 46 39L44 41Q46 47 51 48L53 46Q58 48 57 52Q44 54 40 34Z" fill="#1fc043" />
      </>
    ),
  },
  {
    name: "Messages",
    art: (
      <>
        <path d="M31 5C48 5 61 15 61 30C61 45 48 53 33 53Q28 53 24 52Q20 58 12 58Q15 54 14 48C7 44 2 38 2 30C2 15 14 5 31 5Z" fill="#2f9df4" />
        <path d="M42 30C53 30 61 35 61 43Q61 49 56 52Q56 57 60 60Q53 60 49 56C35 58 24 53 24 43C24 35 31 30 42 30Z" fill="#edf4fb" />
        <path d="M34 43h.1M43 43h.1M52 43h.1" stroke="#14559c" strokeWidth="6" strokeLinecap="round" />
      </>
    ),
  },
  {
    name: "Pages",
    art: (
      <g transform="rotate(-5 32 32)">
        <rect x="6" y="4" width="48" height="58" fill="#fbfbfb" />
        <rect x="6" y="4" width="48" height="13" fill="#f7941d" />
        <text x="23" y="15" textAnchor="middle" fontSize="9" fill="#fff" fontFamily="Inter, sans-serif">PAGES</text>
        <rect x="11" y="21" width="22" height="17" fill="#2c8fe0" />
        <path d="M22 24L28 30L22 36L16 30Z" fill="#f7941d" />
        <path d="M37 22H50M37 26H50M37 30H50M37 34H50M11 42H50M11 46H50M11 50H50M11 54H40" stroke="#b5b5b5" strokeWidth="1.500" />
        <path d="M60 4L54 5L45 44L43 62L51 46Z" fill="#f5a442" />
        <path d="M44.500 46L43 62L51 46Z" fill="#333" />
      </g>
    ),
  },
  {
    name: "Reminders",
    badge: "3",
    art: (
      <g transform="rotate(-5 32 32)">
        <rect x="8" y="4" width="50" height="59" rx="6" fill="#2e3136" />
        <rect x="7" y="3" width="48" height="58" rx="5" fill="#fafafa" />
        <path d="M22 23H52M22 34H52M22 45H52" stroke="#d6d6d6" strokeWidth="1.500" />
        <circle cx="15" cy="17" r="4" fill="#f7941d" />
        <circle cx="15" cy="28" r="4" fill="#2c9cf0" />
        <circle cx="15" cy="39" r="4" fill="#5ec936" />
        <circle cx="15" cy="50" r="4" fill="#b765d8" />
      </g>
    ),
  },
  {
    name: "Keynote",
    art: (
      <>
        <path d="M31 26H34V58H31Z" fill="#b9bec2" />
        <ellipse cx="32" cy="58" rx="14" ry="4" fill="#c5ccd1" />
        <path d="M9 2H57L60 24V27H4V24Z" fill="#2ba0e0" />
        <rect x="16" y="5" width="34" height="16" fill="#f6f9fb" />
        <circle cx="26" cy="13" r="6" fill="#6cc04a" />
        <path d="M26 13V7A6 6 0 0 1 32 13Z" fill="#f05a5a" />
        <path d="M37 10H46M37 13H46M37 16H43" stroke="#aaa" />
      </>
    ),
  },
  {
    name: "Numbers",
    art: (
      <>
        <path d="M4 36H60V60H2Z" fill="#f1f1f1" />
        <rect x="10" y="34" width="10" height="20" fill="#e84a56" />
        <rect x="22" y="20" width="11" height="34" fill="#f08e2a" />
        <rect x="35" y="4" width="10" height="50" fill="#27bd48" />
        <rect x="47" y="13" width="10" height="41" fill="#2b8fe6" />
      </>
    ),
  },
  {
    name: "News",
    art: (
      <>
        <circle cx="32" cy="32" r="30" fill="#f5f5f7" stroke="#f23b55" strokeWidth="3" />
        <path d="M14 14H26L50 44V50H39L14 21Z" fill="#f23b55" />
        <path d="M38 14H50V30ZM14 34L27 50H14Z" fill="#f23b55" />
      </>
    ),
  },
  {
    name: "iTunes",
    art: (
      <>
        <defs>
          <linearGradient id="tunes" x1="0" y1="0" x2="0.400" y2="1">
            <stop offset="0" stopColor="#f4527f" />
            <stop offset="0.550" stopColor="#b16bf0" />
            <stop offset="1" stopColor="#3aa9f5" />
          </linearGradient>
        </defs>
        <circle cx="32" cy="32" r="29.500" fill="#f8f8fb" stroke="url(#tunes)" strokeWidth="4" />
        <path d="M24 18L46 13V42A6 6 0 1 1 42 36V23L28 26V46A6 6 0 1 1 24 40Z" fill="url(#tunes)" />
      </>
    ),
  },
  {
    name: "Photos",
    art: (
      <>
        <circle cx="32" cy="32" r="30" fill="#f5f4f2" />
        {petals.map((c, i) => (
          <rect key={c} x="25" y="6" width="14" height="24" rx="7" fill={c} opacity="0.85" transform={`rotate(${i * 45} 32 32)`} />
        ))}
      </>
    ),
  },
  {
    name: "App Store",
    art: (
      <>
        <circle cx="32" cy="32" r="30" fill="#e8edf2" />
        <circle cx="32" cy="32" r="27" fill="#1b8df2" />
        <path d="M35 14L19 46M29 14L47 48M13 39H38M44 39H52" stroke="#fff" strokeWidth="5" strokeLinecap="round" />
      </>
    ),
  },
  {
    name: "System Preferences",
    badge: "2",
    art: (
      <>
        <rect x="2" y="4" width="60" height="56" rx="3" fill="#8b9197" />
        <circle cx="32" cy="32" r="24" fill="#2d3034" />
        <circle cx="32" cy="32" r="20" fill="none" stroke="#a9aeb3" strokeWidth="5" strokeDasharray="3 2" />
        <circle cx="32" cy="32" r="16" fill="#44484d" stroke="#b5babf" strokeWidth="4" />
        <path d="M32 32L47 34M32 32L24 19M32 32L25 45" stroke="#b5babf" strokeWidth="4" />
        <circle cx="32" cy="32" r="4" fill="#d5d9dc" />
      </>
    ),
  },
];

const photoArt = (
  <>
    <path d="M10 5H58V50H10Z" fill="#8a6c42" />
    <path d="M2 17L50 7L56 49L8 59Z" fill="#f6f6f6" />
    <path d="M6 20L47 12L52 46L12 55Z" fill="#3f6fb5" />
    <path d="M6 20L47 12L48 22L8 30Z" fill="#bcd6ec" />
    <path d="M10 46L24 38L38 42L50 34L52 46L12 55Z" fill="#a79a86" />
    <path d="M9 40L24 36L36 39L46 36L38 43L24 40L10 46Z" fill="#e9eef2" />
    <path d="M44 44H62L61 58Q53 63 45 58Z" fill="#6d675e" />
    <circle cx="52" cy="41" r="11" fill="#35393d" stroke="#a9a39a" strokeWidth="4" />
    <path d="M45 41Q52 34 59 41Q52 39 45 41Z" fill="#8fa3b3" />
  </>
);

const eclipseArt = (
  <>
    <circle cx="29" cy="32" r="30" fill="#f7941e" />
    <circle cx="34" cy="32" r="30" fill="#2c2255" />
    <path d="M4.500 26H63.500M4 32H64M4.500 38H63.500" stroke="#fff" strokeWidth="3" />
  </>
);

const runningItems: DockItem[] = [
  { name: "Preview", running: true, art: photoArt },
  {
    name: "Word",
    running: true,
    art: (
      <>
        <rect x="16" y="5" width="46" height="14" fill="#41a5ee" />
        <rect x="16" y="18" width="46" height="14" fill="#2b7cd3" />
        <rect x="16" y="31" width="46" height="14" fill="#185abd" />
        <rect x="16" y="44" width="46" height="14" fill="#103f91" />
        <rect x="2" y="17" width="30" height="30" rx="3" fill="#185abd" />
        <text x="17" y="40" textAnchor="middle" fontSize="22" fontWeight="700" fill="#fff" fontFamily="'Open Sans', sans-serif">W</text>
      </>
    ),
  },
  {
    name: "TeamViewer",
    running: true,
    art: (
      <>
        <rect x="4" y="4" width="56" height="56" rx="3" fill="#1277dd" />
        <circle cx="32" cy="32" r="23" fill="#fff" />
        <path d="M11 32L24 23V29H40V23L53 32L40 41V35H24V41Z" fill="#1277dd" />
      </>
    ),
  },
  {
    name: "TextEdit",
    running: true,
    art: (
      <g transform="rotate(-5 32 32)">
        <rect x="8" y="3" width="46" height="58" fill="#fbfbfb" />
        <path d="M8 12H54M8 19H54M8 26H54M8 33H54M8 40H54M8 47H54M8 54H54" stroke="#c9cfd6" strokeWidth="1.500" />
        <path d="M58 2L54 2L40 60L45 55Z" fill="#8797a8" />
      </g>
    ),
  },
  {
    name: "Excel",
    running: true,
    art: (
      <>
        <rect x="16" y="5" width="23" height="27" fill="#21a366" />
        <rect x="39" y="5" width="23" height="27" fill="#33c481" />
        <rect x="16" y="31" width="23" height="27" fill="#185c37" />
        <rect x="39" y="31" width="23" height="14" fill="#107c41" />
        <rect x="39" y="45" width="23" height="13" fill="#185c37" />
        <rect x="2" y="17" width="30" height="30" rx="3" fill="#107c41" />
        <text x="17" y="40" textAnchor="middle" fontSize="22" fontWeight="700" fill="#fff" fontFamily="'Open Sans', sans-serif">X</text>
      </>
    ),
  },
  { name: "Eclipse", running: true, art: eclipseArt },
  {
    name: "PowerPoint",
    running: true,
    art: (
      <>
        <path d="M36 5A27 27 0 0 0 36 59A27 27 0 0 0 63 32Z" fill="#d35230" />
        <path d="M36 5A27 27 0 0 1 63 32H36Z" fill="#ff8f6b" />
        <path d="M36 5A27 27 0 0 0 9 32H36Z" fill="#ed6c47" />
        <rect x="2" y="17" width="30" height="30" rx="3" fill="#c43e1c" />
        <text x="17" y="40" textAnchor="middle" fontSize="22" fontWeight="700" fill="#fff" fontFamily="'Open Sans', sans-serif">P</text>
      </>
    ),
  },
  {
    name: "Edge",
    running: true,
    art: (
      <>
        <defs>
          <linearGradient id="edge" x1="0" y1="0.500" x2="1" y2="0.300">
            <stop offset="0" stopColor="#2aa9e8" />
            <stop offset="1" stopColor="#56d364" />
          </linearGradient>
        </defs>
        <rect x="4" y="4" width="56" height="56" rx="13" fill="#fff" />
        <circle cx="32" cy="32" r="20.500" fill="#1378cf" />
        <path d="M12 30C13 18 22 11.500 32 11.500C44 11.500 53 19 53 30C53 38 44 40 38 37C40 33 38 26 30 24C22 22 15 25 12 30Z" fill="url(#edge)" />
        <path d="M24 30C20 42 32 52 48 45C42 53 34 53 28 52C20 48 18 38 24 30Z" fill="#0c4c95" />
        <path d="M36 29C40 36 44 41 55 37V44L50 44C40 46 32 40 33 33Z" fill="#fff" />
      </>
    ),
  },
  {
    name: "Terminal",
    running: true,
    art: (
      <>
        <rect x="3" y="6" width="58" height="51" rx="2" fill="#26282a" stroke="#b9bcbf" strokeWidth="2" />
        <path d="M10 15L17 19L10 23M19 25H27" fill="none" stroke="#fff" strokeWidth="2.500" />
      </>
    ),
  },
  {
    name: "Acrobat",
    running: true,
    art: (
      <>
        <rect x="4" y="4" width="56" height="56" rx="12" fill="#b30b00" />
        <g transform="translate(5 5) scale(1.120)"><AcrobatMark color="#fff" width={3} /></g>
      </>
    ),
  },
];

// Minimized windows, each a small page with the badge of its app
function Minimized({ fill, badge }: { fill: string; badge: React.ReactNode }) {
  return (
    <>
      <rect x="-1" y="14" width="66" height="38" fill={fill} />
      <rect x="-1" y="14" width="66" height="4" fill="#d8dde2" />
      <path d="M4 22H18M4 26H15M4 30H18M4 34H14M24 22H48M24 26H40" stroke="#d3d3d8" strokeWidth="1.500" />
      <g transform="translate(40 40) scale(0.400)">{badge}</g>
    </>
  );
}

const minimizedItems: DockItem[] = [
  { name: "Eclipse window", art: <Minimized fill="#fdfdfd" badge={eclipseArt} /> },
  {
    name: "Notes window",
    art: (
      <Minimized
        fill="#f9f8f4"
        badge={
          <g transform="rotate(-6 32 32)">
            <rect x="6" y="2" width="50" height="58" fill="#fdfdf8" />
            <rect x="6" y="2" width="50" height="14" fill="#fbcf2c" />
          </g>
        }
      />
    ),
  },
  { name: "Preview window", art: <Minimized fill="#ededed" badge={photoArt} /> },
  { name: "Second preview window", art: <Minimized fill="#f7f7f7" badge={photoArt} /> },
  {
    name: "Trash",
    art: (
      <>
        <path d="M14 10L22 2L28 8L36 1L42 7L50 4L54 12Z" fill="#e5e5e5" />
        <path d="M18 8L24 12L30 5L34 12L44 6" stroke="#51606b" strokeWidth="2.500" fill="none" />
        <path d="M8 10H58L52 60Q33 66 15 60Z" fill="#d6d5d2" />
        <path d="M22 14L25 60M42 14L40 60" stroke="#e4e3e0" strokeWidth="7" />
        <ellipse cx="33" cy="11" rx="25" ry="4" fill="none" stroke="#f2f2f0" strokeWidth="2" />
      </>
    ),
  },
];

function DockSlot({ item }: { item: DockItem }) {
  return (
    <li className="relative flex flex-1 flex-col items-center">
      <button type="button" aria-label={item.name}>
        <svg viewBox="0 0 64 64" className="size-16" overflow="visible" aria-hidden="true">
          {item.art}
        </svg>
      </button>
      {item.badge && (
        <span className="absolute -top-1 right-0 flex size-7 items-center justify-center rounded-full bg-[#fb4438] font-[Inter,sans-serif] text-lg text-white">
          {item.badge}
        </span>
      )}
      {item.running &&
        (item.name === "Launchpad" ? (
          <span className="mt-1 h-2 w-[70px] rounded-sm border-2 border-[#5d2906]" />
        ) : (
          <span className="mt-1 size-2 rounded-full bg-[#5d2906]" />
        ))}
    </li>
  );
}

function Dock() {
  return (
    <ul className="mx-14 mt-1 flex h-[92px] rounded-t-xl bg-linear-to-b from-[#cf9f68] to-[#dca668] pt-[11px] pr-2 pl-1">
      {appItems.map((d) => (
        <DockSlot key={d.name} item={d} />
      ))}
      <li className="mt-2 flex h-14 w-8 justify-center">
        <span className="w-0.5 bg-[#a5703a]" />
      </li>
      {runningItems.map((d) => (
        <DockSlot key={d.name} item={d} />
      ))}
      <li className="mt-1 flex h-[68px] w-8 justify-center">
        <span className="w-0.5 bg-[#a5703a]" />
      </li>
      {minimizedItems.map((d) => (
        <DockSlot key={d.name} item={d} />
      ))}
    </ul>
  );
}

export default function App() {
  return (
    <div className="flex min-h-screen flex-col bg-linear-to-b from-[#2f4a73] from-50% via-[#7d5d3c] via-95% to-[#c09765] font-['Liberation_Sans',Arial,sans-serif]">
      <MenuBar />
      <div className="relative mt-0.5 flex flex-1 flex-col overflow-hidden rounded-xl bg-[#fafafa]">
        <TitleBar />
        <TabBar />
        <Toolbar />
        <div className="flex flex-1">
          <Rail />
          <ContentPanel />
          <DocumentView />
          <ToolsPane />
        </div>
        {/* soft shade along the lower edge */}
        <div className="pointer-events-none absolute inset-x-0 bottom-0 h-20 bg-linear-to-b from-transparent to-black/6" />
      </div>
      <Dock />
    </div>
  );
}
